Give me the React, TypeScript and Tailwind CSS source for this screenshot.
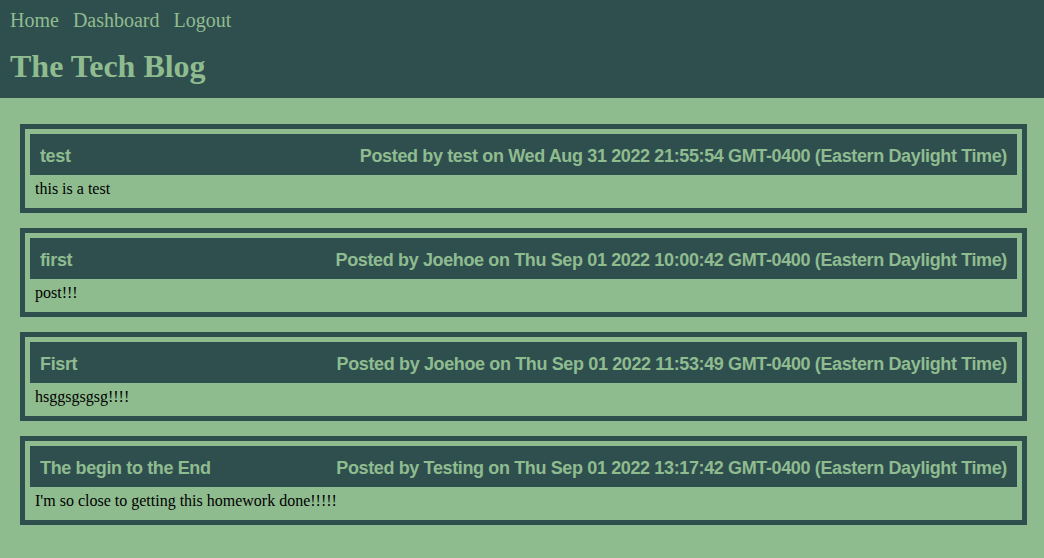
const posts = [
  {
    title: "test",
    meta: "Posted by test on Wed Aug 31 2022 21:55:54 GMT-0400 (Eastern Daylight Time)",
    body: "this is a test",
  },
  {
    title: "first",
    meta: "Posted by Joehoe on Thu Sep 01 2022 10:00:42 GMT-0400 (Eastern Daylight Time)",
    body: "post!!!",
  },
  {
    title: "Fisrt",
    meta: "Posted by Joehoe on Thu Sep 01 2022 11:53:49 GMT-0400 (Eastern Daylight Time)",
    body: "hsggsgsgsg!!!!",
  },
  {
    title: "The begin to the End",
    meta: "Posted by Testing on Thu Sep 01 2022 13:17:42 GMT-0400 (Eastern Daylight Time)",
    body: "I'm so close to getting this homework done!!!!!",
  },
];

export default function App() {
  return (
    <div className="min-h-[558px] bg-[#8fbc8f] font-['Liberation_Serif',serif] text-black">
      <header className="bg-[#2f4f4f] px-[10px] pt-[9px] pb-[13px] text-[#8fbc8f]">
        <nav className="flex gap-[14px] text-[20px] leading-[23px]">
          <a href="#">Home</a>
          <a href="#">Dashboard</a>
          <a href="#">Logout</a>
        </nav>
        <h1 className="mt-[16px] text-[32px] leading-[37px] font-bold">The Tech Blog</h1>
      </header>

      <main className="flex flex-col gap-[15px] pt-[26px] pl-[20px] pr-[17px] pb-[33px]">
        {posts.map((p) => (
          <article key={p.meta} className="border-[5px] border-[#2f4f4f] p-[5px]">
            <div className="flex h-[41px] items-center justify-between bg-[#2f4f4f] px-[10px] pt-[4px] font-['Liberation_Sans',sans-serif] text-[18px] font-bold tracking-[-0.37px] text-[#8fbc8f]">
              <span>{p.title}</span>
              <span>{p.meta}</span>
            </div>
            <p className="px-[5px] pt-[5px] pb-[5px] text-[16px] leading-[18px]">{p.body}</p>
          </article>
        ))}
      </main>
    </div>
  );
}
